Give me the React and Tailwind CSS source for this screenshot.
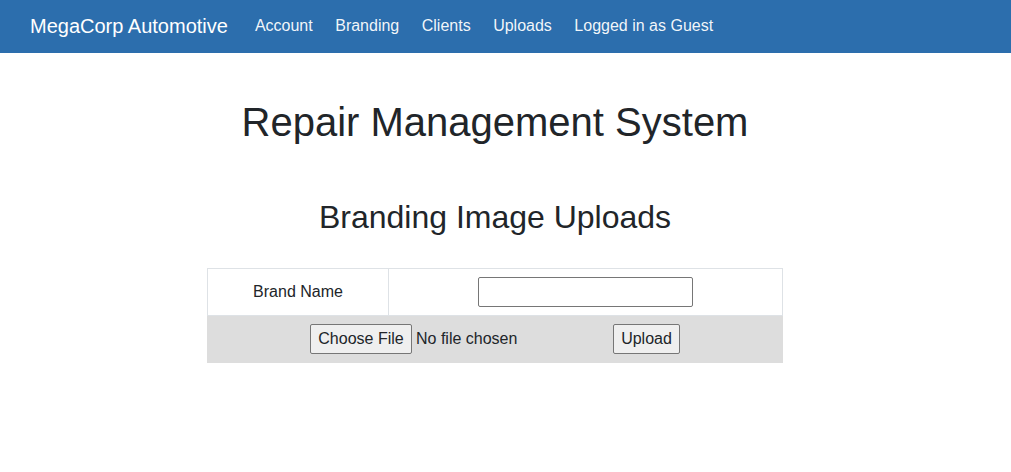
export default function App() {
  return (
    <div className="min-h-screen bg-white text-[#212529] font-['Liberation_Sans',Arial,sans-serif]">
      {/* Navbar */}
      <nav className="h-[53px] bg-[#2c6ead] flex items-center px-[30px] pb-[2px]">
        <span className="text-white text-[20px] mr-[27px]">MegaCorp Automotive</span>
        <div className="flex items-center gap-[22.5px] text-[16px] text-white/95">
          <span>Account</span>
          <span>Branding</span>
          <span>Clients</span>
          <span>Uploads</span>
          <span>Logged in as Guest</span>
        </div>
      </nav>

      <main className="flex flex-col items-center pr-[21px]">
        <h1 className="mt-[45px] text-[40px] leading-[48px]">Repair Management System</h1>
        <h2 className="mt-[52px] text-[32px] leading-[38px]">Branding Image Uploads</h2>

        <table className="mt-[32px] w-[576px] border-collapse text-[16px]">
          <tbody>
            <tr className="h-[47px]">
              <td className="w-[181px] border border-[#dee2e6] text-center">Brand Name</td>
              <td className="border border-[#dee2e6] text-center">
                <input
                  type="text"
                  className="w-[215px] h-[30px] border border-[#767676] rounded-[2px] align-middle"
                />
              </td>
            </tr>
            <tr className="h-[47px] bg-[#dddddd]">
              <td colSpan={2} className="border border-[#dddddd]">
                <div className="flex items-center justify-center">
                  <div className="flex items-center w-[303px]">
                    <button className="h-[30px] w-[102px] bg-[#efefef] border border-[#767676] rounded-[2px]">
                      Choose File
                    </button>
                    <span className="ml-[4px]">No file chosen</span>
                  </div>
                  <button className="h-[30px] w-[67px] bg-[#efefef] border border-[#767676] rounded-[2px]">
                    Upload
                  </button>
                </div>
              </td>
            </tr>
          </tbody>
        </table>
      </main>
    </div>
  );
}
